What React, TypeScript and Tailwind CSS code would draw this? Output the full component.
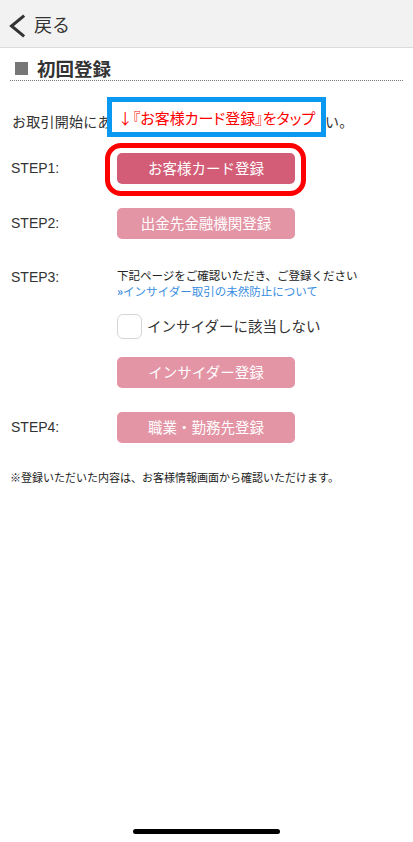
import React from "react";

const jp = "font-['Noto_Sans_CJK_JP','Noto_Sans',sans-serif]";
const latin = "font-['Liberation_Sans','Noto_Sans_CJK_JP',sans-serif]";

const StepButton: React.FC<{ label: string; active?: boolean }> = ({ label, active }) => (
  <button
    className={`w-[178px] h-[31px] rounded-[5px] text-white text-[14.5px] leading-none ${jp} ${
      active ? "bg-[#d35d77]" : "bg-[#e394a5]"
    }`}
  >
    {label}
  </button>
);

export default function App() {
  return (
    <div className={`h-[842px] flex flex-col bg-white text-[#333] ${jp}`}>
      {/* header */}
      <div className="h-[48px] bg-[#f2f2f2] border-b border-[#dcdcdc] flex items-center">
        <svg width="32" height="48" viewBox="0 0 32 48" className="shrink-0">
          <path d="M23 16.5 L11.5 26 L23 35.5" fill="none" stroke="#333" strokeWidth="3" strokeLinecap="square" />
        </svg>
        <span className="ml-[2px] text-[18px] leading-none text-[#333]">戻る</span>
      </div>

      <div className="px-[10px]">
        {/* title */}
        <div className="pt-[9px] pb-[1px] border-b border-dotted border-[#777] flex items-center">
          <span className="ml-[5px] w-[13px] h-[13px] bg-[#777] shrink-0" />
          <h1 className="ml-[9px] text-[18.5px] leading-[22px] font-bold text-[#333]">初回登録</h1>
        </div>

        {/* intro, with the tap hint laid over it */}
        <div className="relative mt-[30px]">
          <p className="text-[14px] leading-[20px] pl-[2px] tracking-[0.25px] whitespace-nowrap">
            お取引開始にあたり、以下の情報をご登録ください。
          </p>
          <div className="absolute left-[97px] top-[-14px] w-[219px] h-[40px] border-[5px] border-[#0a98f0] bg-white flex items-center justify-center">
            <span className="text-[#ff0000] text-[15px] leading-none whitespace-nowrap [font-feature-settings:'palt']">
              ↓『お客様カード登録』をタップ
            </span>
          </div>
        </div>

        {/* STEP1 */}
        <div className="mt-[22px] flex items-center">
          <div className={`w-[107px] pl-[1px] text-[14px] ${latin}`}>STEP1:</div>
          <div className="relative">
            <StepButton label="お客様カード登録" active />
            <div className="absolute -left-[12px] -right-[11px] -top-[10px] -bottom-[12px] border-[5px] border-[#ff0000] rounded-[16px]" />
          </div>
        </div>

        {/* STEP2 */}
        <div className="mt-[24px] flex items-center">
          <div className={`w-[107px] pl-[1px] text-[14px] ${latin}`}>STEP2:</div>
          <StepButton label="出金先金融機関登録" />
        </div>

        {/* STEP3 */}
        <div className="mt-[28px] flex items-start">
          <div className={`w-[107px] pl-[1px] text-[14px] leading-[20px] ${latin}`}>STEP3:</div>
          <div className="flex flex-col">
            <p className="text-[11.5px] leading-[16px] text-[#222]">下記ページをご確認いただき、ご登録ください</p>
            <a className="text-[11.5px] leading-[16px] text-[#3a8ee2]">
              <span className="font-bold">»</span>インサイダー取引の未然防止について
            </a>
            <label className="mt-[15px] flex items-center">
              <span className="w-[25px] h-[25px] rounded-[6px] border-[1.5px] border-[#d6d6d6] bg-white shrink-0" />
              <span className="ml-[5px] text-[14.5px] leading-none text-[#333]">インサイダーに該当しない</span>
            </label>
            <div className="mt-[18px]">
              <StepButton label="インサイダー登録" />
            </div>
          </div>
        </div>

        {/* STEP4 */}
        <div className="mt-[24px] flex items-center">
          <div className={`w-[107px] pl-[1px] text-[14px] ${latin}`}>STEP4:</div>
          <StepButton label="職業・勤務先登録" />
        </div>

        <p className="mt-[26px] text-[11px] leading-[16px] text-[#222]">※登録いただいた内容は、お客様情報画面から確認いただけます。</p>
      </div>

      <div className="flex-1" />
      <div className="flex justify-center pb-[8px]">
        <div className="w-[147px] h-[5px] rounded-full bg-black" />
      </div>
    </div>
  );
}
